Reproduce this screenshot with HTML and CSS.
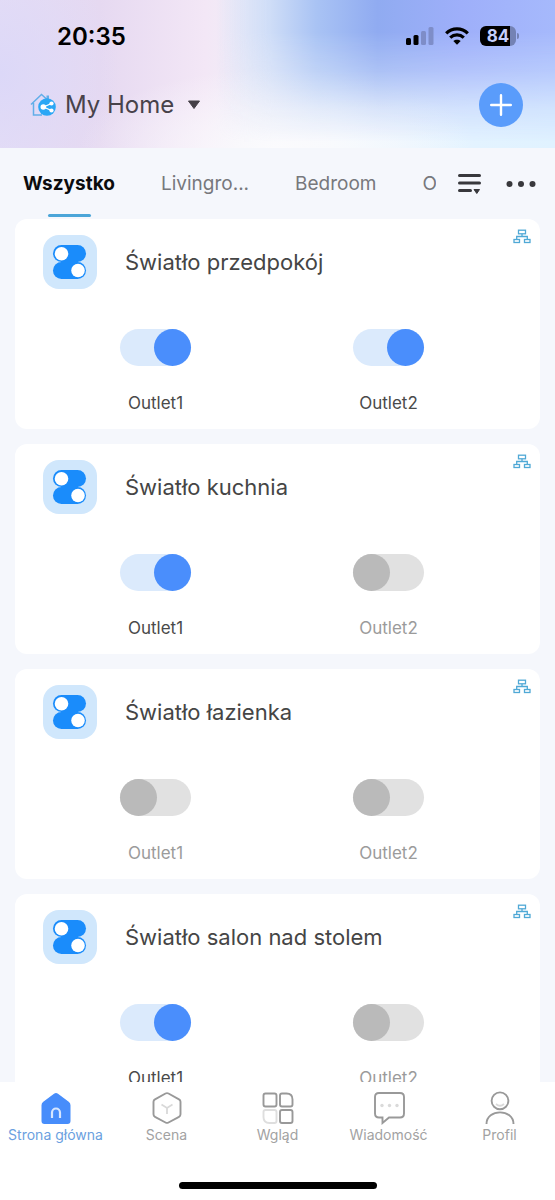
FILE: index.html
```
<!DOCTYPE html>
<html lang="pl">
<head>
<meta charset="utf-8">
<meta name="viewport" content="width=device-width, initial-scale=1">
<title>My Home</title>
<link rel="stylesheet" href="styles.css">
</head>
<body>
<svg class="sprite" aria-hidden="true">
  <symbol id="device" viewBox="0 0 54 54">
    <rect width="54" height="54" rx="16" fill="#d0e7fc"/>
    <rect x="10" y="10" width="33" height="17" rx="8.500" fill="#1a8cfb"/>
    <rect x="10" y="27" width="33" height="17" rx="8.500" fill="#1a8cfb"/>
    <circle cx="18.500" cy="18.700" r="6.800" fill="#fff"/>
    <circle cx="35" cy="35.500" r="6.800" fill="#fff"/>
  </symbol>
  <symbol id="network" viewBox="0 0 18 16">
    <g fill="none" stroke="#50a9d6" stroke-width="1.300">
      <rect x="5.500" y="1.200" width="7" height="3.600"/>
      <rect x="1" y="10.500" width="5.500" height="3"/>
      <rect x="11.500" y="10.500" width="5.500" height="3"/>
      <path d="M9 4.800v2.700M3.700 10.500v-3h10.600v3"/>
    </g>
  </symbol>
</svg>
<div class="app">
  <header class="header">
    <div class="status">
      <time class="clock">20:35</time>
      <div class="indicators">
        <svg width="28" height="18" viewBox="0 0 28 18" aria-label="Signal"><rect y="11" width="5" height="7" rx="1.500"/><rect x="7.500" y="8" width="5" height="10" rx="1.500"/><g fill="#7e8dc8"><rect x="15" y="4" width="5" height="14" rx="1.500"/><rect x="22.500" y="0" width="5" height="18" rx="1.500"/></g></svg>
        <svg width="24" height="18" viewBox="0 0 24 18" aria-label="Wi-Fi"><g fill="none" stroke="#000" stroke-width="3.200"><path d="M1.200 6.300C7.200.3 16.800.3 22.800 6.300"/><path d="M5.200 10.700c4-3.700 9.600-3.700 13.600 0"/></g><path d="M12 17.800l-3.700-3.700c2-1.900 5.400-1.900 7.400 0z"/></svg>
        <span class="battery">84</span>
      </div>
    </div>
    <div class="titlebar">
      <button class="home" type="button">
        <svg width="27" height="24" viewBox="0 0 27 24" aria-hidden="true">
          <path d="M1 11.500L11.500 1.500 22 11M3.500 10v12H12" fill="none" stroke="#62aee9" stroke-width="1.500"/>
          <path d="M16.500 2.500h2.500V8l-2.500-2z" fill="#62aee9"/>
          <circle cx="17" cy="14" r="8.800" fill="#2ba7f5"/>
          <path d="M21.500 10.500L13.500 14l8 3.500" fill="none" stroke="#fff" stroke-width="1.300"/>
          <g fill="#fff"><circle cx="13.300" cy="14" r="2.800"/><circle cx="21.500" cy="10.500" r="2.100"/><circle cx="21.500" cy="17.500" r="2.100"/></g>
        </svg>
        <span>My Home</span>
        <svg class="caret" width="14" height="10" viewBox="0 0 14 10" aria-hidden="true"><path d="M1.500 1h11L7 8.500z" fill="#454047" stroke="#454047" stroke-linejoin="round"/></svg>
      </button>
      <button class="add" type="button" aria-label="Dodaj"><svg width="22" height="22" viewBox="0 0 22 22"><path d="M11 1.200v19.600M1.200 11h19.600" stroke="#fff" stroke-width="2.400" stroke-linecap="round"/></svg></button>
    </div>
  </header>
  <div class="tabbar">
    <nav class="tabs">
      <button class="tab active" type="button">Wszystko</button>
      <button class="tab" type="button">Livingro...</button>
      <button class="tab" type="button">Bedroom</button>
      <button class="tab" type="button">O</button>
    </nav>
    <button class="tool" type="button" aria-label="Lista"><svg width="26" height="22" viewBox="0 0 26 22"><path d="M1.500 2.500h20M1.500 10h20M1.500 17.500h11" stroke="#38383c" stroke-width="3" stroke-linecap="round"/><path d="M16 16.500h5.500l-2.700 4z" fill="#38383c" stroke="#38383c" stroke-linejoin="round"/></svg></button>
    <button class="tool" type="button" aria-label="Więcej"><svg width="30" height="22" viewBox="0 0 30 22" fill="#38383c"><circle cx="3.500" cy="11" r="3"/><circle cx="15" cy="11" r="3"/><circle cx="26.500" cy="11" r="3"/></svg></button>
  </div>
  <main class="list">
    <section class="card">
      <div class="card-head"><svg class="device"><use href="#device"/></svg><h2>Światło przedpokój</h2></div>
      <svg class="network"><use href="#network"/></svg>
      <div class="outlets">
        <label class="outlet"><input type="checkbox" checked><span>Outlet1</span></label>
        <label class="outlet"><input type="checkbox" checked><span>Outlet2</span></label>
      </div>
    </section>
    <section class="card">
      <div class="card-head"><svg class="device"><use href="#device"/></svg><h2>Światło kuchnia</h2></div>
      <svg class="network"><use href="#network"/></svg>
      <div class="outlets">
        <label class="outlet"><input type="checkbox" checked><span>Outlet1</span></label>
        <label class="outlet"><input type="checkbox"><span>Outlet2</span></label>
      </div>
    </section>
    <section class="card">
      <div class="card-head"><svg class="device"><use href="#device"/></svg><h2>Światło łazienka</h2></div>
      <svg class="network"><use href="#network"/></svg>
      <div class="outlets">
        <label class="outlet"><input type="checkbox"><span>Outlet1</span></label>
        <label class="outlet"><input type="checkbox"><span>Outlet2</span></label>
      </div>
    </section>
    <section class="card">
      <div class="card-head"><svg class="device"><use href="#device"/></svg><h2>Światło salon nad stolem</h2></div>
      <svg class="network"><use href="#network"/></svg>
      <div class="outlets">
        <label class="outlet"><input type="checkbox" checked><span>Outlet1</span></label>
        <label class="outlet"><input type="checkbox"><span>Outlet2</span></label>
      </div>
    </section>
  </main>
  <footer class="footer">
    <nav class="bottom-nav">
      <a class="nav-item current" href="#home"><svg viewBox="0 0 34 34"><path d="M15 2.800q2-1.600 4 0l10.700 8q1.800 1.400 1.800 3.500V30q0 3-3 3h-23q-3 0-3-3V14.300q0-2.100 1.800-3.500z" fill="#478dfb"/><path d="M13 27v-5.500a4 4 0 0 1 8 0V27" fill="none" stroke="#d6e6ff" stroke-width="2.200"/></svg><span>Strona główna</span></a>
      <a class="nav-item" href="#scene"><svg viewBox="0 0 34 34"><path d="M15.500 2.500q1.500-.8 3 0L29 8.300q1.500.8 1.500 2.500v12.500q0 1.700-1.500 2.500l-10.500 5.700q-1.500.8-3 0L5 25.800q-1.500-.8-1.500-2.500V10.800Q3.500 9.100 5 8.300z" fill="none" stroke="#999" stroke-width="1.900"/><path d="M11.500 13.500L17 17l5.500-3.500M17 17v6" fill="none" stroke="#d9d9d9" stroke-width="1.800"/></svg><span>Scena</span></a>
      <a class="nav-item" href="#overview"><svg viewBox="0 0 34 34"><g fill="none" stroke="#999" stroke-width="1.900"><rect x="2.500" y="2.500" width="13" height="13" rx="2"/><path d="M19 4.500q0-2 2-2h4.500q6 0 6 6v5q0 2-2 2H21q-2 0-2-2z"/><rect x="19" y="19" width="12.500" height="13" rx="2"/><path d="M15.500 21q0-2-2-2h-9q-2 0-2 2v5q0 6 6 6h5q2 0 2-2z" stroke="#dedede"/></g></svg><span>Wgląd</span></a>
      <a class="nav-item" href="#messages"><svg viewBox="0 0 34 34"><path d="M7 2h21q4 0 4 4v16.500q0 4-4 4H17L10.500 32v-5.500H7q-4 0-4-4V6q0-4 4-4z" fill="none" stroke="#999" stroke-width="1.900"/><g fill="#dadada"><circle cx="10" cy="14.500" r="1.700"/><circle cx="17.500" cy="14.500" r="1.700"/><circle cx="25" cy="14.500" r="1.700"/></g></svg><span>Wiadomość</span></a>
      <a class="nav-item" href="#profile"><svg viewBox="0 0 34 34"><g fill="none" stroke="#999" stroke-width="1.900"><circle cx="17" cy="9.800" r="8.400"/><path d="M3.500 33c0-15.500 27-15.500 27 0"/></g><path d="M13 13q4 3.500 8 0" fill="none" stroke="#d9d9d9" stroke-width="1.700"/></svg><span>Profil</span></a>
    </nav>
    <div class="home-indicator"></div>
  </footer>
</div>
</body>
</html>
```
FILE: styles.css
```
* { box-sizing: border-box; }
body { margin: 0; font-family: Inter, "Liberation Sans", sans-serif; background: #f5f7fc; color: #444; }
button { border: 0; padding: 0; background: none; font: inherit; color: inherit; }
h2 { margin: 0; font-weight: 400; }
svg { display: block; flex: none; }
.sprite { position: absolute; width: 0; height: 0; }
.app { display: flex; flex-direction: column; height: 100vh; }

.header {
  position: relative;
  isolation: isolate;
  flex: none;
  padding-bottom: 20px;
  background:
    radial-gradient(ellipse 120px 130px at 0 50%, #dcd8f8, rgba(220, 216, 248, 0)),
    radial-gradient(ellipse 200px 80px at 50% 100%, #fbfbfd, rgba(251, 251, 253, 0)),
    linear-gradient(to right, #e6def5 0%, #e6d9f1 18%, #f3e7f6 37%, #f0eef8 45%, #f1f7fd 60%, #e3f3ff 85%, #e0f2ff 100%);
}
.header::before {
  content: "";
  position: absolute;
  inset: 0;
  z-index: -1;
  background: linear-gradient(to right, rgba(205, 221, 247, 0) 39%, #cddcf7 49%, #a9c3f4 57%, #90abf1 68%, #9eaffa 83%, #a6b9fc 100%);
  -webkit-mask-image: linear-gradient(to bottom, #000 22%, rgba(0, 0, 0, 0.7) 48%, rgba(0, 0, 0, 0.25) 73%, transparent 96%);
  mask-image: linear-gradient(to bottom, #000 22%, rgba(0, 0, 0, 0.7) 48%, rgba(0, 0, 0, 0.25) 73%, transparent 96%);
}
.status { display: flex; justify-content: space-between; align-items: center; height: 72px; padding: 0 39px 0 57px; }
.clock { font-size: 24px; font-weight: 600; color: #000; }
.indicators { display: flex; align-items: center; gap: 11px; }
.battery {
  position: relative;
  width: 36px; height: 20px;
  border-radius: 6px;
  background: linear-gradient(to right, #000 84%, #7482b4 84%);
  color: #c5cffc;
  font-size: 17px; font-weight: 700; line-height: 20px; text-align: center;
}
.battery::after { content: ""; position: absolute; left: 37px; top: 7px; width: 2px; height: 6px; border-radius: 0 2px 2px 0; background: #7482b4; }
.titlebar { display: flex; justify-content: space-between; align-items: center; height: 56px; padding: 10px 32px 0 30px; }
.home { display: flex; align-items: center; gap: 8px; font-size: 24px; line-height: 30px; color: #48424a; }
.caret { margin-left: 5px; }
.add { display: grid; place-items: center; width: 44px; height: 44px; border-radius: 50%; background: #5a9cfb; }

.tabbar { flex: none; display: flex; align-items: center; height: 71px; padding: 0 19px 0 23px; gap: 22px; }
.tabs { display: flex; gap: 46px; flex: 1; min-width: 0; overflow: hidden; height: 100%; }
.tab { position: relative; flex: none; font-size: 19px; color: #77787c; }
.tab.active { font-weight: 700; color: #0c0c0e; }
.tab.active::after { content: ""; position: absolute; left: 50%; bottom: 2px; width: 43px; height: 3px; margin-left: -21px; border-radius: 2px; background: #4ba5d8; }

.list { flex: 1; min-height: 0; overflow: hidden; display: flex; flex-direction: column; gap: 15px; padding: 0 15px; }
.card { position: relative; flex: none; padding: 16px 35px 16px 24px; border-radius: 12px; background: #fff; }
.card-head { display: flex; align-items: center; gap: 28px; padding-left: 4px; }
.device { width: 54px; height: 54px; }
.card-head h2 { font-size: 22px; line-height: 30px; color: #454545; }
.network { position: absolute; top: 10px; right: 9px; width: 18px; height: 16px; }
.outlets { display: grid; grid-template-columns: 1fr 1fr; margin-top: 40px; }
.outlet { display: flex; flex-direction: column; align-items: center; gap: 27px; font-size: 17px; line-height: 20px; color: #9b9b9b; }
.outlet:has(input:checked) { color: #4a4a4a; }
.outlet input { appearance: none; margin: 0; width: 71px; height: 37px; border-radius: 19px; background: #e1e1e1; }
.outlet input::before { content: ""; display: block; width: 37px; height: 37px; border-radius: 50%; background: #bababa; }
.outlet input:checked { background: #dbeafc; }
.outlet input:checked::before { margin-left: auto; background: #4a8efc; }

.footer { flex: none; height: 118px; background: #fff; display: flex; flex-direction: column; justify-content: space-between; align-items: center; padding: 9px 0 11px; }
.bottom-nav { display: grid; grid-template-columns: repeat(5, 1fr); width: 100%; }
.nav-item { display: flex; flex-direction: column; align-items: center; gap: 1px; font-size: 14px; line-height: 18px; color: #a2a2a2; text-decoration: none; white-space: nowrap; }
.nav-item svg { width: 34px; height: 34px; }
.nav-item.current { color: #6b9fe0; }
.home-indicator { width: 198px; height: 7px; border-radius: 4px; background: #000; }
```
